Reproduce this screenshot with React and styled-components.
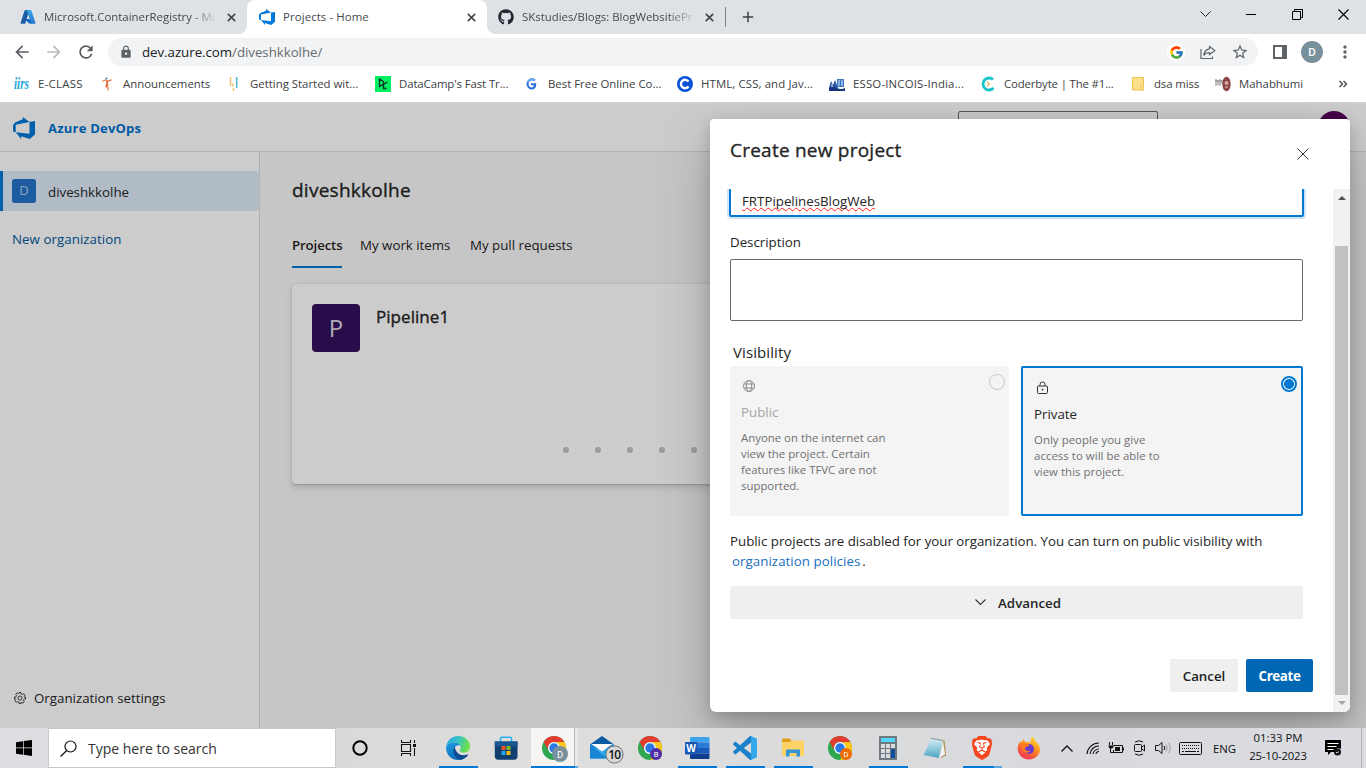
import React from "react";
import styled, { createGlobalStyle, css } from "styled-components";
import { FcGoogle } from "react-icons/fc";
import { FaGithub } from "react-icons/fa";
import { SiBrave } from "react-icons/si";
import { MdArrowBack, MdArrowForward, MdRefresh, MdLock, MdStarBorder, MdMoreVert, MdAdd } from "react-icons/md";

const Global = createGlobalStyle`
  * { box-sizing: border-box; }
  html, body { margin: 0; padding: 0; overflow: hidden; }
  body { font-family: "Open Sans", "Noto Sans", sans-serif; color: #252525; }
  svg { display: block; flex: none; }
`;

const Screen = styled.div`
  width: 1366px;
  height: 768px;
  display: flex;
  flex-direction: column;
  overflow: hidden;
  background: #fff;
`;

const Label = styled.span`
  font-size: ${(p) => p.$size || 13.3}px;
  font-weight: ${(p) => p.$weight || 400};
  letter-spacing: ${(p) => p.$track || 0}px;
  color: ${(p) => p.$color || "inherit"};
  white-space: nowrap;
  ${(p) => p.$medium && css`-webkit-text-stroke: 0.35px currentColor;`}
`;

/* ---------- Browser chrome ---------- */

const TabStrip = styled.div`
  height: 34px;
  flex: none;
  display: flex;
  background: #dee1e6;
`;

const Tab = styled.div`
  position: relative;
  width: ${(p) => p.$w}px;
  height: 34px;
  display: flex;
  align-items: center;
  padding: 0 11px 0 ${(p) => p.$pad}px;
  color: #45494d;
  ${(p) =>
    p.$active &&
    css`
      background: #fff;
      border-radius: 8px 8px 0 0;
      &::before,
      &::after {
        content: "";
        position: absolute;
        bottom: 0;
        width: 8px;
        height: 8px;
      }
      &::before {
        left: -8px;
        background: radial-gradient(circle at 0 0, transparent 7.5px, #fff 8px);
      }
      &::after {
        right: -8px;
        background: radial-gradient(circle at 100% 0, transparent 7.5px, #fff 8px);
      }
    `}
`;

const TabTitle = styled(Label)`
  width: ${(p) => p.$w}px;
  margin: -1px auto 0 8px;
  ${(p) => p.$fade && css`mask-image: linear-gradient(90deg, #000 ${p.$w - 26}px, transparent ${p.$w + 2}px);`}
`;

const TabDivider = styled.div`
  width: 1px;
  height: 20px;
  margin-top: 7px;
  background: #80868b;
`;

const NewTab = styled.div`
  width: 44px;
  height: 34px;
  display: flex;
  align-items: center;
  justify-content: center;
  color: #3c4043;
`;

const WindowControls = styled.div`
  margin-left: auto;
  height: 29px;
  display: flex;
`;

const WindowButton = styled.div`
  width: 46px;
  display: flex;
  align-items: center;
  justify-content: center;
`;

const Toolbar = styled.div`
  height: 35px;
  flex: none;
  display: flex;
  align-items: center;
  padding: 1px 0 0 6px;
  color: #5f6368;
`;

const NavButton = styled.div`
  width: 32px;
  display: flex;
  justify-content: center;
  color: ${(p) => (p.$off ? "#babcbe" : "#5a5e63")};
`;

const Omnibox = styled.div`
  width: 1150px;
  height: 28px;
  margin: 0 15px 0 6px;
  border-radius: 14px;
  background: #f1f3f4;
  display: flex;
  align-items: center;
  padding: 0 9px 0 11px;
`;

const Url = styled(Label)`
  margin-left: 9px;
  margin-right: auto;
  color: #202124;
  & > span { color: #686c70; }
`;

const OmniActions = styled.div`
  display: flex;
  align-items: center;
  gap: 15px;
`;

const GoogleChip = styled.div`
  width: 18px;
  height: 18px;
  border-radius: 9px;
  background: #fff;
  display: flex;
  align-items: center;
  justify-content: center;
`;

const Profile = styled.div`
  width: 22px;
  height: 22px;
  margin: 0 12px 0 14px;
  border-radius: 50%;
  background: #78909c;
  color: #fff;
  font: 500 11.5px/22px Roboto, sans-serif;
  text-align: center;
`;

const BookmarksBar = styled.div`
  height: 34px;
  flex: none;
  display: flex;
  padding: 0 0 4px 14px;
  border-bottom: 1px solid #d2d2d2;
`;

const Bookmark = styled.div`
  width: ${(p) => p.$w}px;
  display: flex;
  align-items: center;
  gap: 8px;
  color: #3c4043;
  svg { overflow: visible; }
`;

const CloseMark = () => (
  <svg width="9" height="9" stroke="#45494d" strokeWidth="1.7"><path d="M.8.8l7.4 7.4M8.2.8L.8 8.2" /></svg>
);

const AzureLogo = () => (
  <svg width="16" height="16" viewBox="0 0 16 16">
    <defs>
      <linearGradient id="az" x1="0" y1="0" x2="0" y2="1"><stop offset="0" stopColor="#3ba4e8" /><stop offset="1" stopColor="#2878cf" /></linearGradient>
    </defs>
    <path d="M5.3 1h4.2L5.3 14.2c-.1.3-.4.5-.7.5H1.4c-.6 0-1-.5-.8-1L4.6 1.5C4.7 1.2 5 1 5.3 1z" fill="#1b5ea8" />
    <path d="M11.4 10H4.7l4.5 4.5h3.7z" fill="#0b67c0" />
    <path d="M10.7 1H6.2c.3 0 .6.2.7.5l4 12.2c.1.5-.2 1-.8 1h4.5c.6 0 1-.5.8-1l-4-12.2c-.1-.3-.4-.5-.7-.5z" fill="url(#az)" />
  </svg>
);

const DevOpsLogo = ({ size }) => (
  <svg width={size} height={size} viewBox="0 0 24 24" fill="#0078d7">
    <path d="M0 8.877L2.247 5.91l8.405-3.416V.022l7.37 5.393L2.966 8.338v8.225L0 15.707zm24-4.45v14.651l-5.753 4.9-9.303-3.057v3.056l-5.978-7.416 15.057 1.798V5.415z" />
  </svg>
);

const bookmarkIcons = {
  iirs: (
    <svg width="16" height="16">
      <text x="0" y="12.5" fontFamily="Liberation Serif" fontStyle="italic" fontWeight="700" fontSize="16" textLength="15" lengthAdjust="spacingAndGlyphs" fill="#1ba4dc">iirs</text>
    </svg>
  ),
  ann: (
    <svg width="16" height="16" fill="none" strokeLinecap="round">
      <path d="M4 5c2-1.5 4-1 4.500 1l.5 8" stroke="#e88a4c" strokeWidth="1.3" />
      <path d="M8 5.5l4-1.500M8 7l-1 4" stroke="#e0582c" strokeWidth="1.3" />
      <circle cx="7.5" cy="2.6" r="1" fill="#2b7fc0" />
    </svg>
  ),
  start: (
    <svg width="16" height="16">
      <path d="M4.5 1v9M6.8 7.500v3" stroke="#f3c37c" strokeWidth="1.6" />
      <path d="M7.500 12v3" stroke="#f3c37c" strokeWidth="1.6" />
      <path d="M10.7 1v11" stroke="#55bcd6" strokeWidth="1.6" />
    </svg>
  ),
  camp: (
    <svg width="16" height="16" fill="none" stroke="#06352a" strokeWidth="1.3">
      <rect width="16" height="16" fill="#03ef62" stroke="none" />
      <path d="M4.5 3v7.5L8.5 8V5.5z M12.5 6L8.5 8.5v4L11.5 12.5" />
    </svg>
  ),
  g: (
    <svg width="16" height="16" fill="none" strokeWidth="2">
      <path d="M10.8 4.500C8 2 3.500 4 3.500 8c0 3 2.500 5 5 4.500 2-.5 2.700-2 2.700-4.200H7" stroke="#2f6fdb" />
      <path d="M3.700 6.500C4.500 3.800 8 2.200 10.800 4.500" stroke="#66a8ee" />
    </svg>
  ),
  c: (
    <svg width="16" height="16" fill="none">
      <circle cx="8" cy="8" r="8" fill="#0a53d8" />
      <path d="M11.5 5.5A4.2 4.2 0 1 0 11.5 10.5" stroke="#fff" strokeWidth="2.4" />
    </svg>
  ),
  esso: (
    <svg width="16" height="16">
      <path d="M0 12l2-7 2 4 2-5 3 8z" fill="#2b55a4" />
      <path d="M8 3h7v8H8z" fill="#3879c4" />
      <path d="M0 12q4-2 8 0t8 0v3H0z" fill="#16367e" />
      <path d="M10 4v6M13 4v6M3 8v3" stroke="#dceaf8" />
    </svg>
  ),
  coder: (
    <svg width="16" height="16" fill="none">
      <path d="M13 3.5A6 6 0 1 0 13.5 12" stroke="#19c3cc" strokeWidth="2.8" />
      <path d="M7 6l2.5 2L7 10.5" stroke="#f0bd6a" strokeWidth="1.5" />
    </svg>
  ),
  folder: (
    <svg width="16" height="16">
      <path d="M2.5 1.5h11V14h-11z" fill="#fee08b" stroke="#eac24e" />
      <path d="M11 10h2.5v4H11z" fill="#fff0b8" stroke="#eac24e" />
    </svg>
  ),
  maha: (
    <svg width="16" height="16">
      <path d="M1 3v7M3 4v5M5 3v7M7 4v4M0 5h7" stroke="#8a8282" strokeWidth="1" />
      <ellipse cx="11.5" cy="8" rx="4.2" ry="7.3" fill="#8c4545" />
      <circle cx="11.5" cy="7" r="2" fill="#d8a5a0" />
      <path d="M10 11h3" stroke="#e8c9c0" />
    </svg>
  ),
};

const bookmarks = [
  ["iirs", "E-CLASS", 85, 0.3],
  ["ann", "Announcements", 127, 0],
  ["start", "Getting Started wit...", 149, 0],
  ["camp", "DataCamp's Fast Tr...", 149, -0.1],
  ["g", "Best Free Online Co...", 153, 0],
  ["c", "HTML, CSS, and Jav...", 152, 0.12],
  ["esso", "ESSO-INCOIS-India...", 151, 0.18],
  ["coder", "Coderbyte | The #1...", 150, -0.15],
  ["folder", "dsa miss", 85, -0.1],
  ["maha", "Mahabhumi", 123, 0],
];

/* ---------- Page ---------- */

const Page = styled.div`
  position: relative;
  height: 625px;
  flex: none;
  overflow: hidden;
  display: flex;
  flex-direction: column;
  background: #fff;
`;

const PageHeader = styled.header`
  height: 49px;
  flex: none;
  display: flex;
  align-items: flex-start;
  padding: 8px 16px 0 13px;
  border-bottom: 1px solid #dedede;
`;

const Brand = styled.div`
  height: 34px;
  display: flex;
  align-items: center;
  gap: 13px;
  margin-right: auto;
`;

const HeaderSearch = styled.div`
  width: 200px;
  height: 32px;
  border: 1px solid #6a6a6a;
  border-radius: 2px;
  margin-right: 160px;
`;

const HeaderAvatar = styled.div`
  width: 32px;
  height: 32px;
  border-radius: 50%;
  background: #5c005c;
`;

const PageBody = styled.div`
  flex: 1;
  display: flex;
`;

const Sidebar = styled.nav`
  width: 260px;
  border-right: 1px solid #dedede;
  padding-top: 19px;
  display: flex;
  flex-direction: column;
`;

const OrgRow = styled.div`
  height: 40px;
  display: flex;
  align-items: center;
  gap: 12px;
  padding-left: 9px;
  border-left: 3px solid #0078d4;
  border-radius: 0 3px 3px 0;
  background: #deebf9;
`;

const OrgName = styled(Label)`
  padding-top: 1px;
`;

const Tile = styled.div`
  width: ${(p) => p.$size}px;
  height: ${(p) => p.$size}px;
  flex: none;
  border-radius: ${(p) => p.$radius}px;
  background: ${(p) => p.$bg};
  color: ${(p) => p.$fg};
  font-size: ${(p) => p.$font}px;
  line-height: ${(p) => p.$size - 1}px;
  text-align: center;
`;

const NewOrg = styled.div`
  padding: 17px 12px 0;
  line-height: 20px;
  color: #005a9e;
`;

const OrgSettings = styled.div`
  margin-top: auto;
  padding: 0 0 20px 14px;
  display: flex;
  align-items: center;
  gap: 8px;
  line-height: 20px;
`;

const Main = styled.main`
  flex: 1;
  padding: 22px 32px 0;
  background: #f8f8f8;
`;

const OrgTitle = styled.div`
  line-height: 32px;
  height: 34px;
`;

const Pivot = styled.div`
  display: flex;
  height: 60px;
  margin-bottom: 16px;
`;

const PivotTab = styled.div`
  width: ${(p) => p.$w}px;
  margin-right: 18px;
  padding-top: 26px;
  line-height: 20px;
  ${(p) => p.$on && css`border-bottom: 2px solid #0078d4;`}
`;

const ProjectCard = styled.section`
  height: 200px;
  border-radius: 4px;
  background: #fff;
  box-shadow: 0 3.2px 7.2px rgba(0, 0, 0, 0.13), 0 0.6px 1.8px rgba(0, 0, 0, 0.15);
  padding: 20px;
  display: flex;
  flex-direction: column;
  justify-content: space-between;
`;

const CardHead = styled.div`
  display: flex;
  gap: 16px;
  line-height: 26px;
`;

const Dots = styled.div`
  display: flex;
  gap: 26px;
  padding: 0 0 11px 251px;
`;

const Dot = styled.i`
  width: 6px;
  height: 6px;
  border-radius: 50%;
  background: #c4c4c4;
`;

const Scrim = styled.div`
  position: absolute;
  inset: 0;
  background: rgba(0, 0, 0, 0.2);
`;

/* ---------- Dialog ---------- */

const Dialog = styled.div`
  position: absolute;
  left: 710px;
  top: 16px;
  width: 640px;
  height: 593px;
  border-radius: 4px 4px 6px 6px;
  background: #fff;
  overflow: hidden;
  display: flex;
  flex-direction: column;
  box-shadow: 0 25.6px 57.6px rgba(0, 0, 0, 0.22), 0 4.8px 14.4px rgba(0, 0, 0, 0.18);
`;

const DialogHeader = styled.div`
  height: 70px;
  flex: none;
  display: flex;
  justify-content: space-between;
  padding: 18px 41px 0 20px;
  line-height: 27px;
  svg { margin-top: 11px; }
`;

const DialogBody = styled.div`
  flex: 1;
  display: flex;
  overflow: hidden;
`;

const Form = styled.div`
  width: 623px;
  padding: 0 20px;
`;

const NameInput = styled.div`
  width: 575px;
  height: 44px;
  margin: -16px 0 0 -1px;
  border: 2px solid #0078d4;
  border-radius: 2px;
  box-shadow: 0 0 0 2px #cfe4f6;
  padding: 15px 0 0 11px;
  line-height: 20px;
`;

const Misspelt = styled(Label)`
  text-decoration: underline wavy #ff2020 1px;
  text-decoration-skip-ink: none;
  text-underline-offset: 1px;
`;

const FieldLabel = styled.div`
  margin-top: 14px;
  line-height: 20px;
  height: 28px;
`;

const TextArea = styled.div`
  width: 573px;
  height: 62px;
  border: 1px solid #6b6b6b;
  border-radius: 2px;
`;

const VisibilityLabel = styled.div`
  margin-top: 20px;
  padding-left: 3px;
  height: 25px;
  line-height: 23px;
`;

const Options = styled.div`
  display: flex;
  gap: 12px;
`;

const Option = styled.div`
  position: relative;
  width: ${(p) => p.$w}px;
  height: 150px;
  border-radius: 2px;
  background: #f4f4f4;
  padding: 11px;
  ${(p) => p.$on && css`border: 2px solid #0078d4;`}
`;

const OptionIcon = styled.div`
  height: 24px;
  padding: 2px 0 0 1px;
`;

const OptionName = styled.div`
  line-height: 20px;
  height: 29px;
`;

const OptionText = styled.div`
  font-size: 11.4px;
  line-height: 16px;
  letter-spacing: ${(p) => p.$track || 0}px;
  color: #707070;
  white-space: pre;
`;

const Radio = styled.div`
  position: absolute;
  top: 8px;
  right: 4px;
  width: 16px;
  height: 16px;
  border-radius: 50%;
  border: ${(p) => (p.$on ? "2px solid #0078d4" : "1px solid #c8c8c8")};
  ${(p) => p.$on && css`background: radial-gradient(circle, #0078d4 4.6px, #fff 5.3px);`}
`;

const Note = styled.div`
  margin-top: 16px;
  height: 54px;
  display: flex;
  flex-direction: column;
  line-height: 19px;
`;

const NoteLink = styled.div`
  padding-left: 2px;
`;

const Stop = styled(Label)`
  margin-left: 2px;
`;

const Advanced = styled.div`
  width: 573px;
  height: 33px;
  border-radius: 2px;
  background: #efefef;
  display: flex;
  align-items: center;
  justify-content: center;
  gap: 12px;
  padding-left: 3px;
`;

const Actions = styled.div`
  margin: 40px 0 0;
  display: flex;
  justify-content: flex-end;
  gap: 8px;
`;

const Button = styled.div`
  width: ${(p) => p.$w}px;
  height: 33px;
  border-radius: 2px;
  background: ${(p) => (p.$primary ? "#0067b5" : "#efefef")};
  color: ${(p) => (p.$primary ? "#fff" : "#212121")};
  line-height: 33px;
  text-align: center;
`;

const ScrollTrack = styled.div`
  width: 17px;
  background: #f1f1f1;
  display: flex;
  flex-direction: column;
  align-items: center;
`;

const ScrollArrow = styled.div`
  height: ${(p) => p.$h}px;
  padding-top: ${(p) => p.$pad}px;
`;

const ScrollThumb = styled.div`
  width: 13px;
  height: 449px;
  background: #c1c1c1;
`;

/* ---------- Taskbar ---------- */

const Taskbar = styled.div`
  height: 40px;
  flex: none;
  display: flex;
  background: linear-gradient(90deg, #dcdee2 0, #dadada 340px, #dfdedc 540px, #dbdbdc 800px, #d8dade 1100px, #dadce1 100%);
`;

const Start = styled.div`
  width: 48px;
  display: flex;
  align-items: center;
  justify-content: center;
`;

const SearchBox = styled.div`
  width: 288px;
  background: #fff;
  border: 1px solid #c8c8c8;
  display: flex;
  align-items: center;
  gap: 11px;
  padding-left: 11px;
`;

const TaskbarApp = styled.div`
  position: relative;
  width: ${(p) => p.$w || 48}px;
  padding-left: ${(p) => p.$pad || 0}px;
  display: flex;
  align-items: center;
  justify-content: center;
  background: ${(p) => (p.$active ? "linear-gradient(90deg, #f5f4f2 43px, #b9b9b9 43px, #b9b9b9 44px, #ebeae9 44px)" : "none")};
  svg { overflow: visible; }
  &::after {
    content: "";
    position: absolute;
    bottom: 0;
    left: ${(p) => (p.$active ? 0 : p.$line || 5)}px;
    width: ${(p) => (p.$active ? 47 : 39)}px;
    height: 2px;
    background: ${(p) => {
      if (p.$active) return "linear-gradient(90deg, #0078d7 44px, #5da7e4 44px)";
      if (p.$stacked) return "linear-gradient(90deg, #0078d7 31px, #5da7e4 31px)";
      return p.$running ? "#0078d7" : "none";
    }};
  }
`;

const Tray = styled.div`
  margin-left: 2px;
  display: flex;
  align-items: center;
`;

const TrayItem = styled.div`
  width: ${(p) => p.$w}px;
  display: flex;
  justify-content: center;
`;

const Clock = styled.div`
  width: 70px;
  text-align: center;
  line-height: 18px;
  display: flex;
  flex-direction: column;
  padding-bottom: 2px;
`;

const DesktopEdge = styled.div`
  margin-left: auto;
  width: 5px;
  border-left: 1px solid #aeb0b4;
`;

const ChromeIcon = ({ badge, letter, big }) => (
  <svg width="25" height="25" viewBox="0 0 25 25">
    <circle cx="12" cy="12" r="12" fill="#2fa64f" />
    <path d="M1.6 6A12 12 0 0 1 22.4 6H12A6 6 0 0 0 6.8 15Z" fill="#e23c30" />
    <path d="M22.4 6A12 12 0 0 1 12 24L17.2 15A6 6 0 0 0 12 6Z" fill="#fcc61c" />
    <circle cx="12" cy="12" r="6" fill="#fff" />
    <circle cx="12" cy="12" r="4.7" fill="#2a78e8" />
    <circle cx="18" cy="18" r={big ? 8 : 6} fill={badge} />
    <text x="18" y={big ? 21.5 : 20.7} textAnchor="middle" fontFamily="Roboto" fontSize={big ? 9.5 : 7.5} fill="#fff">{letter}</text>
  </svg>
);

const EdgeIcon = () => (
  <svg width="24" height="24" viewBox="0 0 24 24">
    <defs>
      <linearGradient id="e1" x1="0" y1="0" x2="1" y2=".3"><stop offset="0" stopColor="#27a8e5" /><stop offset=".5" stopColor="#35c1c9" /><stop offset="1" stopColor="#6ee04e" /></linearGradient>
      <linearGradient id="e2" x1="0" y1="0" x2=".6" y2="1"><stop offset="0" stopColor="#1a9de0" /><stop offset="1" stopColor="#1068b8" /></linearGradient>
    </defs>
    <path d="M.3 10C1.5 3.5 6.5 0 12 0c7 0 12 4.8 12 10.3 0 4-3 6.4-6.3 6.4-2.7 0-4-1-4-1.9 0-.8 1-1.2 1-2.9 0-2.9-3-5.3-6.7-5.3C4 6.6 1.3 8.2.3 10z" fill="url(#e1)" />
    <path d="M.2 10C2 7.3 5 6.5 8 6.5c3.5 0 5.5 1.5 6 3-4.5-1-6.5 2.5-5 6.5 1.5 4.5 6.5 7 10.5 5.5-2 1.7-4.5 2.5-7.5 2.5C5 24-.8 18 .2 10z" fill="url(#e2)" />
    <path d="M8.8 10.5c-2.5 3-1.6 8.5 2.2 11.5 1.2 1 2.5 1.7 4 1.7 3-.6 5.5-2.2 7-4.6.3-.5-.1-.9-.6-.7-5 2.3-12-.2-12.6-7.9z" fill="#0d4a8f" />
  </svg>
);

const StoreIcon = () => (
  <svg width="24" height="24" viewBox="0 0 24 24">
    <path d="M6.5 6V2.5c0-.8.5-1.3 1.3-1.3h8.4c.8 0 1.3.5 1.3 1.3V6" fill="none" stroke="#27b2ee" strokeWidth="1.6" />
    <path d="M.8 5.5h22.700V20.500c0 2-1.200 3.200-3.200 3.200H4c-2 0-3.200-1.200-3.200-3.200z" fill="#123f70" />
    <path d="M.8 5.500h22.700v5H.8z" fill="#195792" />
    <path d="M7.500 10h4v4h-4z" fill="#f05125" /><path d="M12.500 10h4v4h-4z" fill="#7fba16" />
    <path d="M7.500 15h4v4h-4z" fill="#1fa6ef" /><path d="M12.500 15h4v4h-4z" fill="#fdb813" />
  </svg>
);

const MailIcon = () => (
  <svg width="34" height="28" viewBox="0 0 34 28">
    <path d="M0 10.500L12 2l12 8.500v4H0z" fill="#0c59a4" />
    <path d="M1 10h22l-11 7z" fill="#fff" />
    <path d="M0 10l12 7.500L24 10v14.500H0z" fill="#2aa9ea" />
    <path d="M0 10l17 14.500H0z" fill="#1686d4" />
    <circle cx="24.500" cy="20.500" r="8.600" fill="#d8d8d8" stroke="#555" strokeWidth=".8" />
    <text x="24.300" y="24.800" textAnchor="middle" fontFamily="Open Sans" fontWeight="600" fontSize="12" letterSpacing="-.8" fill="#111">10</text>
  </svg>
);

const WordIcon = () => (
  <svg width="25" height="22" viewBox="0 0 25 22">
    <path d="M6 0h17.5c.5 0 1 .5 1 1v4.500H5V1c0-.5.5-1 1-1z" fill="#3fa2ec" />
    <path d="M5 5.500h19.500V11H5z" fill="#2b7bd6" />
    <path d="M5 11h19.500v5.500H5z" fill="#185abd" />
    <path d="M5 16.500h19.500V21c0 .5-.5 1-1 1H6c-.5 0-1-.5-1-1z" fill="#103f91" />
    <rect x="0" y="5" width="12.500" height="12.500" rx="1" fill="#1b56b5" />
    <text x="6.200" y="15" textAnchor="middle" fontFamily="Open Sans" fontWeight="700" fontSize="10" fill="#fff">W</text>
  </svg>
);

const CodeIcon = () => (
  <svg width="24" height="24" viewBox="0 0 24 24">
    <path fill="#1c82c8" d="M23.15 2.587L18.21.21a1.494 1.494 0 0 0-1.705.29l-9.46 8.63-4.12-3.128a.999.999 0 0 0-1.276.057L.327 7.261A1 1 0 0 0 .326 8.74L3.899 12 .326 15.26a1 1 0 0 0 .001 1.479L1.65 17.94a.999.999 0 0 0 1.276.057l4.12-3.128 9.46 8.63a1.492 1.492 0 0 0 1.704.29l4.942-2.377A1.5 1.5 0 0 0 24 20.06V3.939a1.5 1.5 0 0 0-.85-1.352zm-5.146 14.861L10.826 12l7.178-5.448v10.896z" />
    <path d="M18 .2l5.200 2.400c.5.2.8.7.8 1.300v16.200c0 .6-.3 1-.8 1.300L18 23.800z" fill="#36a8ee" />
  </svg>
);

const FolderIcon = () => (
  <svg width="22" height="20" viewBox="0 0 22 20">
    <path d="M0 2c0-1 .5-1.500 1.500-1.500H7.500L10 3v4H0z" fill="#e0a015" />
    <path d="M0 4h8l2-1.500h12V17c0 .6-.4 1-1 1H1c-.6 0-1-.4-1-1z" fill="#fdd368" />
    <path d="M4 18.500V12.500c0-.6.4-1 1-1h12c.6 0 1 .4 1 1v6h-3.500V15h-7v3.500z" fill="#3594d9" />
  </svg>
);

const CalcIcon = () => (
  <svg width="18" height="24" viewBox="0 0 18 24">
    <rect width="18" height="24" rx="1" fill="#70797f" />
    <rect x="2" y="2" width="14" height="4" fill="#50d4f8" />
    <path d="M2 8h4v4H2zM7 8h4v4H7zM12 8h4v4h-4zM2 13h4v4H2zM7 13h4v4H7zM2 18h4v4H2zM7 18h4v4H7z" fill="#d8dcdf" />
    <path d="M12 13h4v9h-4z" fill="#0d4f9c" />
  </svg>
);

const NotepadIcon = () => (
  <svg width="24" height="23" viewBox="0 0 24 23">
    <defs><linearGradient id="np" x1="0" y1="0" x2="0" y2="1"><stop offset="0" stopColor="#d5eff6" /><stop offset="1" stopColor="#4fa5c2" /></linearGradient></defs>
    <path d="M8 1.500l13.500 2 1.500 15-5 2.500z" fill="#b08d5c" />
    <path d="M8.500 1.500L20 3.500l-4 17.500L.5 18z" fill="url(#np)" />
    <path d="M20 3.500l2 14-6 3.500z" fill="#f2f2ee" />
    <path d="M8.500 1.500L20 3.500" stroke="#6f8088" strokeWidth="1.500" strokeDasharray="1 1" />
  </svg>
);

const BraveBox = styled.div`
  display: flex;
  background: radial-gradient(circle, #fff 8.5px, transparent 9px);
`;

const FirefoxIcon = () => (
  <svg width="24" height="24" viewBox="0 0 24 24">
    <defs>
      <linearGradient id="ff" x1=".8" y1="0" x2=".2" y2="1"><stop offset="0" stopColor="#ffe03a" /><stop offset=".45" stopColor="#ff8a1e" /><stop offset="1" stopColor="#f2285e" /></linearGradient>
    </defs>
    <path d="M15 .5c2 1.500 3.500 3 4 5.500.8.3 1.300.9 1.700 1.600C22 9 23 11 23 13.500 23 19 18 23.500 12 23.500S.7 19 .7 12.800C.7 9.500 1.800 7 3.300 5.300c0 .8.1 1.300.3 1.800.8-1 2-1.800 2.700-4 .8 2 2 3 3.500 3.300 1.500-.5 3-.4 4.200.2-.5-2.300-.3-4.500 1-6.100z" fill="url(#ff)" />
    <circle cx="12" cy="13" r="5" fill="#6a3bd0" />
    <path d="M5.500 9c2-2 5.500-1.500 7 0-1 1.800-3 1.700-4.500 2.500-.5 3 2.500 4.500 5.500 3-1.500 3-6.500 3-8-.5-.7-1.700-.7-3.500 0-5z" fill="#ff7a20" />
  </svg>
);

export default function App() {
  return (
    <Screen>
      <Global />
      <TabStrip>
        <Tab $w={247} $pad={20}>
          <AzureLogo />
          <TabTitle $w={172} $size={11.4} $fade>Microsoft.ContainerRegistry - Mi</TabTitle>
          <CloseMark />
        </Tab>
        <Tab $w={240} $pad={12} $active>
          <DevOpsLogo size={16} />
          <TabTitle $w={172} $size={11.4} $track={0.1}>Projects - Home</TabTitle>
          <CloseMark />
        </Tab>
        <Tab $w={238} $pad={11}>
          <FaGithub size={16} color="#24292f" />
          <TabTitle $w={172} $size={11.4} $fade>SKstudies/Blogs: BlogWebsitiePr</TabTitle>
          <CloseMark />
        </Tab>
        <TabDivider />
        <NewTab><MdAdd size={18} /></NewTab>
        <WindowControls>
          <WindowButton><svg width="11" height="7" fill="none" stroke="#222"><path d="M.5.5l5 5 5-5" /></svg></WindowButton>
          <WindowButton><svg width="10" height="1"><path d="M0 .5h10" stroke="#000" /></svg></WindowButton>
          <WindowButton><svg width="11" height="11" fill="none" stroke="#000"><path d="M.5 2.500h8v8h-8zM2.500 2.500v-2h8v8h-2" /></svg></WindowButton>
          <WindowButton><svg width="11" height="11" stroke="#000" strokeWidth="1.100"><path d="M.5.5l10 10M10.500.5l-10 10" /></svg></WindowButton>
        </WindowControls>
      </TabStrip>

      <Toolbar>
        <NavButton><MdArrowBack size={20} /></NavButton>
        <NavButton $off><MdArrowForward size={20} /></NavButton>
        <NavButton><MdRefresh size={20} /></NavButton>
        <Omnibox>
          <MdLock size={14} color="#5f6368" />
          <Url $size={13.3} $track={-0.04}>dev.azure.com<span>/diveshkkolhe/</span></Url>
          <OmniActions>
            <GoogleChip><FcGoogle size={15} /></GoogleChip>
            <svg width="16" height="15" fill="none" stroke="#5f6368" strokeWidth="1.200">
              <path d="M1 4V13.500h11.500V11.500M9.500 1.500l5.300 4-5.300 4V7.500C7 7.500 5 8.500 3.800 10.500 4 6.500 6 4.300 9.500 3.800z" />
            </svg>
            <MdStarBorder size={18} />
          </OmniActions>
        </Omnibox>
        <svg width="14" height="14"><path d="M1 1h12v12H1z" fill="none" stroke="#5f6368" strokeWidth="2" /><path d="M9 1h4v12H9z" fill="#5f6368" /></svg>
        <Profile>D</Profile>
        <MdMoreVert size={20} />
      </Toolbar>

      <BookmarksBar>
        {bookmarks.map(([icon, text, w, track]) => (
          <Bookmark key={text} $w={w}>
            {bookmarkIcons[icon]}
            <Label $size={11.4} $track={track}>{text}</Label>
          </Bookmark>
        ))}
        <Bookmark $w={20}>
          <svg width="10" height="8" fill="none" stroke="#3c4043" strokeWidth="1.300"><path d="M1.500 1l3 3-3 3M5.500 1l3 3-3 3" /></svg>
        </Bookmark>
      </BookmarksBar>

      <Page>
        <PageHeader>
          <Brand>
            <DevOpsLogo size={22} />
            <Label $weight={700} $size={13} $track={0.22} $color="#0071cd">Azure DevOps</Label>
          </Brand>
          <HeaderSearch />
          <HeaderAvatar />
        </PageHeader>
        <PageBody>
          <Sidebar>
            <OrgRow>
              <Tile $size={24} $radius={3} $bg="#2673cb" $fg="#b5cdec" $font={13}>D</Tile>
              <OrgName>diveshkkolhe</OrgName>
            </OrgRow>
            <NewOrg><Label $track={0.05}>New organization</Label></NewOrg>
            <OrgSettings>
              <svg width="12" height="12" viewBox="0 0 24 24" fill="none" stroke="#333" strokeWidth="1.800">
                <circle cx="12" cy="12" r="4" />
                <path d="M10 1h4l.7 3.3 2 .9 2.900-1.800 2.800 2.800-1.800 2.900.9 2L23 10v4l-3.300.7-.9 2 1.800 2.900-2.800 2.800-2.900-1.800-2 .9L14 23h-4l-.7-3.300-2-.9-2.900 1.800-2.800-2.800 1.800-2.900-.9-2L1 14v-4l3.300-.7.9-2-1.800-2.900 2.800-2.800 2.900 1.800 2-.9z" />
              </svg>
              <Label>Organization settings</Label>
            </OrgSettings>
          </Sidebar>
          <Main>
            <OrgTitle><Label $size={19} $track={0.25} $medium>diveshkkolhe</Label></OrgTitle>
            <Pivot>
              <PivotTab $w={50} $on><Label $weight={600} $track={-0.15}>Projects</Label></PivotTab>
              <PivotTab $w={92}><Label>My work items</Label></PivotTab>
              <PivotTab $w={110}><Label>My pull requests</Label></PivotTab>
            </Pivot>
            <ProjectCard>
              <CardHead>
                <Tile $size={48} $radius={4} $bg="#34115e" $fg="#dcd6e2" $font={24}>P</Tile>
                <Label $size={17} $track={0.05} $medium>Pipeline1</Label>
              </CardHead>
              <Dots>{Array.from({ length: 7 }, (_, i) => <Dot key={i} />)}</Dots>
            </ProjectCard>
          </Main>
        </PageBody>
        <Scrim />
        <Dialog>
          <DialogHeader>
            <Label $size={19} $track={0.23} $medium>Create new project</Label>
            <svg width="12" height="12" stroke="#333" strokeWidth="1"><path d="M.5.5l11 11M11.500.5l-11 11" /></svg>
          </DialogHeader>
          <DialogBody>
            <Form>
              <NameInput><Misspelt>FRTPipelinesBlogWeb</Misspelt></NameInput>
              <FieldLabel><Label>Description</Label></FieldLabel>
              <TextArea />
              <VisibilityLabel><Label $size={15} $track={0.1}>Visibility</Label></VisibilityLabel>
              <Options>
                <Option $w={279}>
                  <OptionIcon>
                    <svg width="14" height="14" fill="none" stroke="#8e8e8e"><circle cx="7" cy="7" r="5.500" /><ellipse cx="7" cy="7" rx="2.700" ry="5.500" /><path d="M2 5h10M2 9h10" /></svg>
                  </OptionIcon>
                  <OptionName><Label $color="#a6a6a6">Public</Label></OptionName>
                  <OptionText>{"Anyone on the internet can\nview the project. Certain\nfeatures like TFVC are not\nsupported."}</OptionText>
                  <Radio />
                </Option>
                <Option $w={282} $on>
                  <OptionIcon>
                    <svg width="14" height="14" fill="none" stroke="#333"><rect x="2.500" y="5" width="10" height="7.500" rx="1" /><path d="M5 5V3.500a2.500 2.500 0 0 1 5 0V5" /><circle cx="7.500" cy="8.700" r=".5" fill="#333" /></svg>
                  </OptionIcon>
                  <OptionName><Label>Private</Label></OptionName>
                  <OptionText $track={0.05}>{"Only people you give\naccess to will be able to\nview this project."}</OptionText>
                  <Radio $on />
                </Option>
              </Options>
              <Note>
                <Label $track={-0.01}>Public projects are disabled for your organization. You can turn on public visibility with</Label>
                <NoteLink><Label $color="#1a6fc0" $track={0.05}>organization policies</Label><Stop>.</Stop></NoteLink>
              </Note>
              <Advanced>
                <svg width="11" height="7" fill="none" stroke="#333" strokeWidth="1.100"><path d="M.5.5l5 5 5-5" /></svg>
                <Label $weight={600}>Advanced</Label>
              </Advanced>
              <Actions>
                <Button $w={68}><Label $weight={600}>Cancel</Label></Button>
                <Button $w={67} $primary><Label $weight={700} $track={-0.35}>Create</Label></Button>
              </Actions>
            </Form>
            <ScrollTrack>
              <ScrollArrow $h={57} $pad={7}><svg width="8" height="4"><path d="M0 4l4-4 4 4z" fill="#505050" /></svg></ScrollArrow>
              <ScrollThumb />
              <ScrollArrow $h={17} $pad={6}><svg width="8" height="4"><path d="M0 0l4 4 4-4z" fill="#a3a3a3" /></svg></ScrollArrow>
            </ScrollTrack>
          </DialogBody>
        </Dialog>
      </Page>

      <Taskbar>
        <Start><svg width="16" height="16"><path d="M0 2.3L7 1.2V7.600H0zM7.700 1.100L16 0v7.600H7.700zM0 8.300h7v6.500L0 13.800zM7.700 8.300H16V16l-8.300-1.200z" /></svg></Start>
        <SearchBox>
          <svg width="17" height="17" fill="none" stroke="#111" strokeWidth="1.200"><circle cx="10.500" cy="6.500" r="5.500" /><path d="M6.700 10.500L.5 16.500" /></svg>
          <Label $size={14} $color="#333">Type here to search</Label>
        </SearchBox>
        <TaskbarApp><svg width="16" height="16" fill="none"><circle cx="8" cy="8" r="6.700" stroke="#000" strokeWidth="2" /></svg></TaskbarApp>
        <TaskbarApp>
          <svg width="17" height="16" fill="none" stroke="#111"><path d="M1.500 4.500h9v7h-9zM1 2.500h10M1 13.500h10M1.500 0v2M10.500 0v2M1.500 14v2M10.500 14v2M14.500 0v3M14.500 8v8" strokeWidth="1.100" /><path d="M13 4h3v3h-3z" fill="#111" stroke="none" /></svg>
        </TaskbarApp>
        <TaskbarApp $w={51} $line={7} $running><EdgeIcon /></TaskbarApp>
        <TaskbarApp $w={46}><StoreIcon /></TaskbarApp>
        <TaskbarApp $w={2} />
        <TaskbarApp $w={47} $active><ChromeIcon badge="#78909c" letter="D" big /></TaskbarApp>
        <TaskbarApp $w={50} $pad={8}><MailIcon /></TaskbarApp>
        <TaskbarApp $w={45}><ChromeIcon badge="#512da8" letter="B" /></TaskbarApp>
        <TaskbarApp $running><WordIcon /></TaskbarApp>
        <TaskbarApp $running><CodeIcon /></TaskbarApp>
        <TaskbarApp $running><FolderIcon /></TaskbarApp>
        <TaskbarApp $w={47}><ChromeIcon badge="#ef6c00" letter="D" /></TaskbarApp>
        <TaskbarApp $w={47} $running><CalcIcon /></TaskbarApp>
        <TaskbarApp $w={47}><NotepadIcon /></TaskbarApp>
        <TaskbarApp $w={47} $stacked><BraveBox><SiBrave size={24} color="#f4471f" /></BraveBox></TaskbarApp>
        <TaskbarApp $w={47}><FirefoxIcon /></TaskbarApp>
        <Tray>
          <TrayItem $w={26}><svg width="12" height="7" fill="none" stroke="#111" strokeWidth="1.300"><path d="M.5 6.500L6 1l5.500 5.500" /></svg></TrayItem>
          <TrayItem $w={25}>
            <svg width="14" height="14" fill="none" stroke="#111" strokeWidth="1.100"><path d="M1 13A12 12 0 0 1 13 2M4 13A9 9 0 0 1 13 5M7 13a6 6 0 0 1 6-5M10 13a3 3 0 0 1 3-2.500" /></svg>
          </TrayItem>
          <TrayItem $w={21}>
            <svg width="16" height="12" fill="none" stroke="#111"><path d="M5.500 3.500h9v7h-9V8M15.500 5.500v3M2.500 6v4.500h3M1.500 0v3M4.500 0v3" /><path d="M.5 3.500h5V5q-1 1.500-2.500 1.500T.5 5zM7 5h5v4H7z" fill="#111" stroke="none" /></svg>
          </TrayItem>
          <TrayItem $w={26}>
            <svg width="13" height="16" fill="none" stroke="#111"><rect x="1.500" y="4.500" width="7" height="7" rx="1" /><path d="M9 7l2.500-2v6L9 9M2 2q4-2.500 8 0M2 14q4 2.500 8 0" /></svg>
          </TrayItem>
          <TrayItem $w={22}>
            <svg width="17" height="14" fill="none" stroke="#111"><path d="M.5 4.500h3L7 1.500v11L3.500 9.500h-3zM9 5q1.500 2 0 4" /><path d="M11 3.500q2.500 3.500 0 7M13.500 2q3.500 5 0 10" stroke="#999" /></svg>
          </TrayItem>
          <TrayItem $w={32}>
            <svg width="23" height="13" fill="none" stroke="#111"><rect x=".5" y=".5" width="22" height="12" rx="1" /><path d="M3 3.500h17M3 6.500h17" strokeDasharray="1 1" /><path d="M3 9.500h2M6 9.500h11M18 9.500h2" /></svg>
          </TrayItem>
          <TrayItem $w={37}><Label $size={11.4} $color="#111">ENG</Label></TrayItem>
          <Clock>
            <Label $size={11.4} $color="#111">01:33 PM</Label>
            <Label $size={11.4} $color="#111" $track={-0.2}>25-10-2023</Label>
          </Clock>
          <TrayItem $w={40}>
            <svg width="17" height="16"><path d="M0 0h16v9l-3-1-3 3v1H6l-3 3v-3H0z" fill="#000" /><path d="M2.500 3.500h11M2.500 6.500h9M2.500 9.500h6" stroke="#fff" /><circle cx="12.500" cy="12" r="3.500" fill="#111" /><path d="M11 12.500q2 .8 3-1" stroke="#ddd" fill="none" /></svg>
          </TrayItem>
        </Tray>
        <DesktopEdge />
      </Taskbar>
    </Screen>
  );
}
